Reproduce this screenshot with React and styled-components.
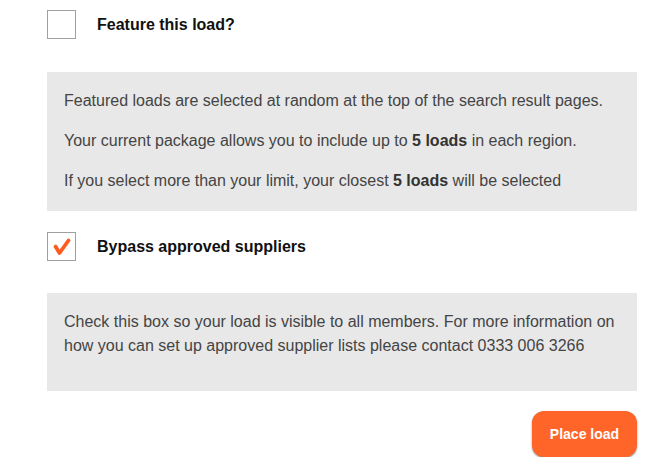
import styled, { createGlobalStyle } from 'styled-components';

const GlobalStyle = createGlobalStyle`
	body {
		margin: 0;
		background: #ffffff;
		font-family: 'Liberation Sans', Arial, sans-serif;
	}
`;

const Form = styled.div`
	width: 590px;
	padding: 10px 0 0 47px;
`;

const OptionRow = styled.label`
	display: flex;
	align-items: center;
	gap: 21px;
	height: 29px;
	margin-bottom: ${({ $gap }) => $gap};
`;

const Box = styled.span`
	box-sizing: border-box;
	width: 29px;
	height: 29px;
	border: 1px solid #a0a0a0;
	background: #ffffff;
	display: flex;
	align-items: center;
	justify-content: center;
`;

const OptionLabel = styled.span`
	font-size: 16px;
	font-weight: 700;
	color: #111111;
`;

const InfoPanel = styled.div`
	background: #e8e8e8;
	padding: 17px 17px ${({ $bottom }) => $bottom};
	margin-bottom: ${({ $gap }) => $gap};
	color: #444444;
	font-size: 16px;
	line-height: 24px;

	p {
		margin: 0 0 16px;
	}

	p:last-child {
		margin-bottom: 0;
	}

	b {
		color: #333333;
	}
`;

const Actions = styled.div`
	display: flex;
	justify-content: flex-end;
	padding-top: 20px;
`;

const PlaceButton = styled.button`
	width: 105px;
	height: 46px;
	border: 0;
	border-radius: 12px;
	background: #ff6428;
	box-shadow: 0 1px 2px rgba(0, 0, 0, 0.45);
	color: #ffffff;
	font-family: 'Liberation Sans', Arial, sans-serif;
	font-size: 14px;
	font-weight: 700;
	cursor: pointer;
`;

const Check = () => (
	<svg width="20" height="20" viewBox="0 0 20 20">
		<path
			d="M3.5 9.5 L7.5 16 L16.5 3.5"
			fill="none"
			stroke="#ff5a1f"
			strokeWidth="3.8"
			strokeLinecap="round"
			strokeLinejoin="round"
		/>
	</svg>
);

export default function App() {
	return (
		<>
			<GlobalStyle />
			<Form>
				<OptionRow $gap="33px">
					<Box />
					<OptionLabel>Feature this load?</OptionLabel>
				</OptionRow>
				<InfoPanel $bottom="18px" $gap="21px">
					<p>Featured loads are selected at random at the top of the search result pages.</p>
					<p>
						Your current package allows you to include up to <b>5 loads</b> in each region.
					</p>
					<p>
						If you select more than your limit, your closest <b>5 loads</b> will be selected
					</p>
				</InfoPanel>
				<OptionRow $gap="32px">
					<Box>
						<Check />
					</Box>
					<OptionLabel>Bypass approved suppliers</OptionLabel>
				</OptionRow>
				<InfoPanel $bottom="33px" $gap="0">
					<p>
						Check this box so your load is visible to all members. For more information on
						how you can set up approved supplier lists please contact 0333 006 3266
					</p>
				</InfoPanel>
				<Actions>
					<PlaceButton>Place load</PlaceButton>
				</Actions>
			</Form>
		</>
	);
}
